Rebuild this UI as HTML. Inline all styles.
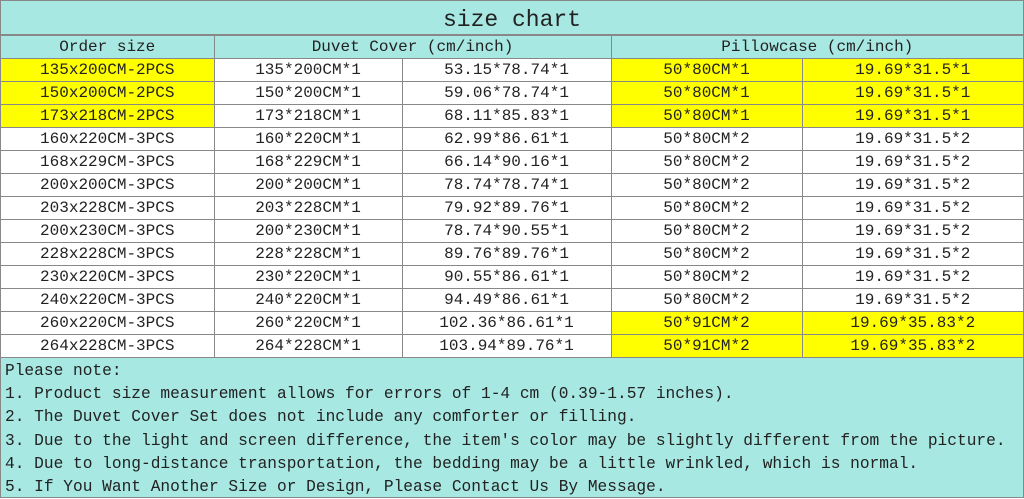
<!DOCTYPE html>
<html><head><meta charset="utf-8"><style>
body{margin:0;width:1024px;height:498px;overflow:hidden;background:#fff;font-family:"Liberation Mono","Noto Sans CJK SC",monospace;color:#222;}
.wrap{position:absolute;left:0;top:0;width:1022px;height:496px;border:1px solid #888;background:#a8e8e2;}
.title{position:absolute;left:0;top:0;width:1022px;height:34px;line-height:38px;text-align:center;font-size:23px;font-weight:normal;border-bottom:1px solid #888;box-sizing:border-box;}
table{position:absolute;left:0;top:34px;border-collapse:collapse;table-layout:fixed;width:1022px;}
td{height:21px;padding:1px 0 0 0;border:1px solid #888;text-align:center;font-size:16px;line-height:21px;background:#fff;white-space:nowrap;overflow:hidden;}
tr.h td{background:#a8e8e2;}
td.y{background:#ffff00;}
td:first-child{border-left:none}
td:last-child{border-right:none}
.notes{position:absolute;left:4px;top:359px;font-size:16.2px;line-height:23.2px;white-space:pre;}
</style></head><body>
<div class="wrap">
<div class="title">size chart</div>
<table>
<colgroup><col style="width:213px"><col style="width:188px"><col style="width:209px"><col style="width:191px"><col style="width:221px"></colgroup>
<tr class="h"><td>Order size</td><td colspan="2">Duvet Cover (cm/inch)</td><td colspan="2">Pillowcase (cm/inch)</td></tr>
<tr><td class="y">135x200CM-2PCS</td><td>135*200CM*1</td><td>53.15*78.74*1</td><td class="y">50*80CM*1</td><td class="y">19.69*31.5*1</td></tr>
<tr><td class="y">150x200CM-2PCS</td><td>150*200CM*1</td><td>59.06*78.74*1</td><td class="y">50*80CM*1</td><td class="y">19.69*31.5*1</td></tr>
<tr><td class="y">173x218CM-2PCS</td><td>173*218CM*1</td><td>68.11*85.83*1</td><td class="y">50*80CM*1</td><td class="y">19.69*31.5*1</td></tr>
<tr><td>160x220CM-3PCS</td><td>160*220CM*1</td><td>62.99*86.61*1</td><td>50*80CM*2</td><td>19.69*31.5*2</td></tr>
<tr><td>168x229CM-3PCS</td><td>168*229CM*1</td><td>66.14*90.16*1</td><td>50*80CM*2</td><td>19.69*31.5*2</td></tr>
<tr><td>200x200CM-3PCS</td><td>200*200CM*1</td><td>78.74*78.74*1</td><td>50*80CM*2</td><td>19.69*31.5*2</td></tr>
<tr><td>203x228CM-3PCS</td><td>203*228CM*1</td><td>79.92*89.76*1</td><td>50*80CM*2</td><td>19.69*31.5*2</td></tr>
<tr><td>200x230CM-3PCS</td><td>200*230CM*1</td><td>78.74*90.55*1</td><td>50*80CM*2</td><td>19.69*31.5*2</td></tr>
<tr><td>228x228CM-3PCS</td><td>228*228CM*1</td><td>89.76*89.76*1</td><td>50*80CM*2</td><td>19.69*31.5*2</td></tr>
<tr><td>230x220CM-3PCS</td><td>230*220CM*1</td><td>90.55*86.61*1</td><td>50*80CM*2</td><td>19.69*31.5*2</td></tr>
<tr><td>240x220CM-3PCS</td><td>240*220CM*1</td><td>94.49*86.61*1</td><td>50*80CM*2</td><td>19.69*31.5*2</td></tr>
<tr><td>260x220CM-3PCS</td><td>260*220CM*1</td><td>102.36*86.61*1</td><td class="y">50*91CM*2</td><td class="y">19.69*35.83*2</td></tr>
<tr><td>264x228CM-3PCS</td><td>264*228CM*1</td><td>103.94*89.76*1</td><td class="y">50*91CM*2</td><td class="y">19.69*35.83*2</td></tr>
</table>
<div class="notes">Please note:
1. Product size measurement allows for errors of 1-4 cm (0.39-1.57 inches).
2. The Duvet Cover Set does not include any comforter or filling.
3. Due to the light and screen difference, the item's color may be slightly different from the picture.
4. Due to long-distance transportation, the bedding may be a little wrinkled, which is normal.
5. If You Want Another Size or Design, Please Contact Us By Message.</div>
</div>
</body></html>
